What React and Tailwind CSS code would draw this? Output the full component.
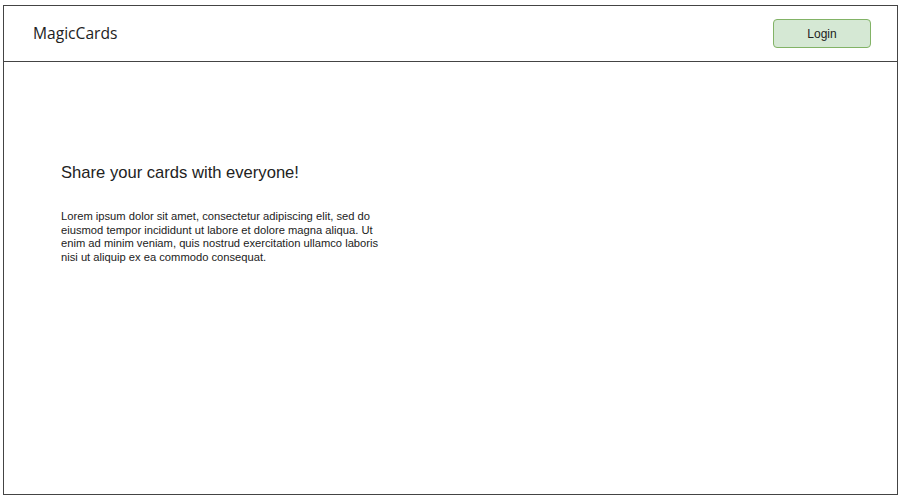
export default function App() {
  return (
    <div className="w-[903px] h-[500px] bg-white pt-[5px] pl-[3px]">
      <div className="w-[895px] h-[490px] border border-[#444] flex flex-col">
        {/* Header */}
        <div className="h-[56px] border-b border-[#444] flex items-center justify-between pl-[29px] pr-[26px]">
          <span className="text-[15.6px] text-[#222] font-['Open_Sans',sans-serif]">MagicCards</span>
          <button className="w-[98px] h-[29px] rounded-[4px] border border-[#82b366] bg-[#d5e8d4] text-[12px] text-[#222] font-['Liberation_Sans',Arial,sans-serif]">
            Login
          </button>
        </div>

        {/* Hero */}
        <div className="pl-[57px] pt-[101px] font-['Liberation_Sans',Arial,sans-serif] text-[#222]">
          <h1 className="text-[16.6px] leading-[20px]">Share your cards with everyone!</h1>
          <p className="mt-[27px] w-[322px] text-[11.2px] leading-[13.5px]">
            Lorem ipsum dolor sit amet, consectetur adipiscing elit, sed do eiusmod tempor incididunt ut labore et dolore magna aliqua. Ut enim ad minim veniam, quis nostrud exercitation ullamco laboris nisi ut aliquip ex ea commodo consequat.
          </p>
        </div>
      </div>
    </div>
  )
}
